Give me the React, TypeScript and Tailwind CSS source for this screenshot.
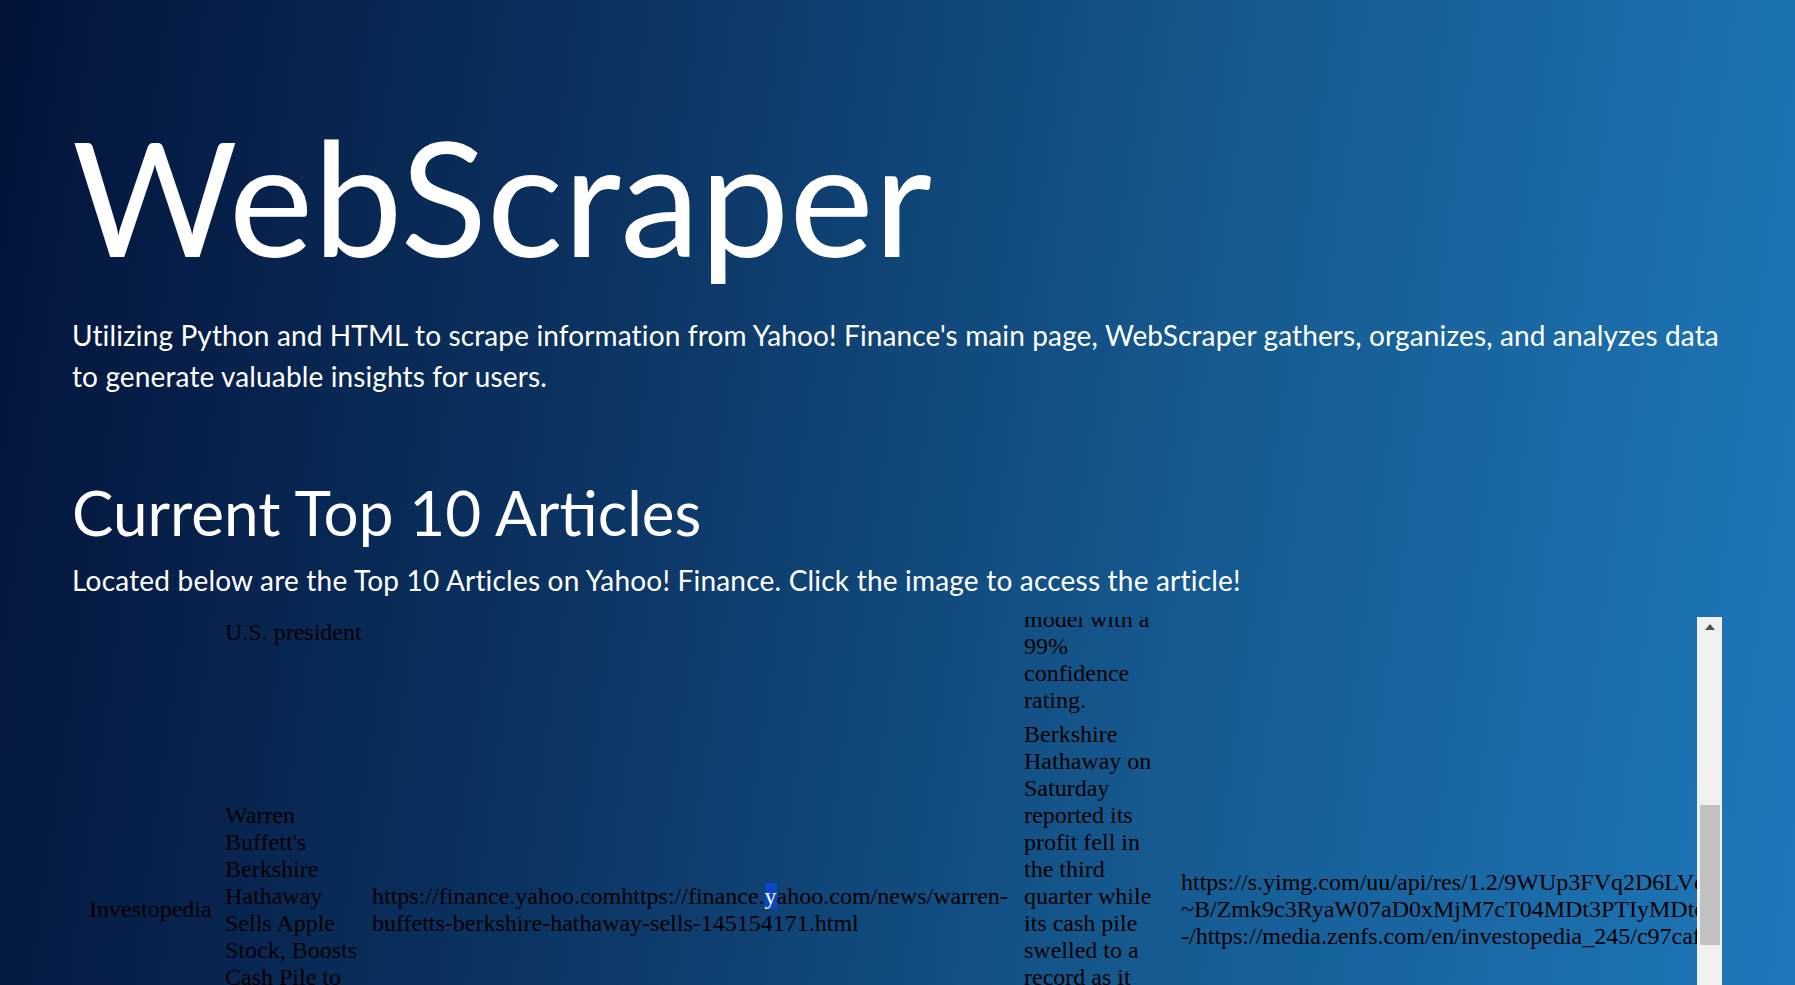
const sans = "font-['Lato',sans-serif]";

function ScrollBar() {
  return (
    <div className="w-[25px] shrink-0 bg-[#f1f1f1] flex flex-col items-center">
      <div className="h-[20px] w-full flex items-center justify-center">
        <div className="w-0 h-0 border-l-[5px] border-r-[5px] border-b-[6px] border-l-transparent border-r-transparent border-b-[#505050]" />
      </div>
      <div className="h-[168px]" />
      <div className="w-[20px] h-[140px] bg-[#c1c1c1]" />
      <div className="h-[200px]" />
    </div>
  );
}

function ArticleTable() {
  return (
    <table className="table-fixed border-separate border-spacing-0 w-[1804px] -mt-[204px] text-black font-['Liberation_Serif',serif] text-[24px] leading-[27px]">
      <colgroup>
        <col className="w-[148px]" />
        <col className="w-[147px]" />
        <col className="w-[652px]" />
        <col className="w-[157px]" />
        <col className="w-[700px]" />
      </colgroup>
      <tbody>
        <tr>
          <td className="align-middle pl-[17px] py-[3.5px]">Forbes</td>
          <td className="align-middle pl-[5px] pr-[2px] py-[3.5px]">
            Prediction Market Odds Shift On Who Will Be The Next
            <br />
            <span className="whitespace-nowrap">U.S. president</span>
          </td>
          <td className="align-middle pl-[5px] pr-[7px] py-[3.5px] whitespace-nowrap">
            https://finance.yahoo.comhttps://finance.yahoo.com/news/prediction-
            <br />
            market-odds-shift-next-president-120031412.html
          </td>
          <td className="align-middle pl-[5px] pr-[20px] py-[3.5px]">
            Bettors have
            <br />
            poured
            <br />
            millions into
            <br />
            the race after
            <br />
            one analyst
            <br />
            released an
            <br />
            updated
            <br />
            model with a
            <br />
            99%
            <br />
            confidence
            <br />
            rating.
          </td>
          <td className="align-middle pl-[5px] py-[3.5px] whitespace-nowrap">
            https://s.yimg.com/uu/api/res/1.2/Hq1kPqTz9vFbVd0lJ0r5Xw--
            <br />
            ~B/Zmk9c3RyaW07aD0xMjM7cT04MDt3PTIyMDtoPTEyMw-
            <br />
            -/https://media.zenfs.com/en/forbes_616/3f1a9bd2a0c4
          </td>
        </tr>
        <tr>
          <td className="align-middle pl-[17px] py-[3.5px]">Investopedia</td>
          <td className="align-middle pl-[5px] pr-[2px] py-[3.5px]">
            Warren Buffett's Berkshire Hathaway Sells Apple Stock, Boosts Cash Pile to Record
          </td>
          <td className="align-middle pl-[5px] pr-[7px] py-[3.5px] whitespace-nowrap">
            https://finance.yahoo.comhttps://finance.
            <span className="bg-[#0b46c6] text-white">y</span>
            ahoo.com/news/warren-
            <br />
            buffetts-berkshire-hathaway-sells-145154171.html
          </td>
          <td className="align-middle pl-[5px] pr-[20px] py-[3.5px]">
            Berkshire Hathaway on Saturday reported its profit fell in the third quarter while its cash pile swelled to a record as it continued to sell stocks, including Apple.
          </td>
          <td className="align-middle pl-[5px] py-[3.5px] whitespace-nowrap">
            https://s.yimg.com/uu/api/res/1.2/9WUp3FVq2D6LVcEZv4wdqA--
            <br />
            ~B/Zmk9c3RyaW07aD0xMjM7cT04MDt3PTIyMDtoPTEyMw-
            <br />
            -/https://media.zenfs.com/en/investopedia_245/c97caf5e8d1b
          </td>
        </tr>
      </tbody>
    </table>
  );
}

export default function App() {
  return (
    <div className="h-[985px] overflow-hidden bg-[linear-gradient(98deg,#03133a_0%,#0c3564_35%,#15598f_65%,#1e78ba_100%)] text-white px-[72px]">
      <h1 className={`${sans} text-[160px] leading-none font-normal pt-[115px]`}>WebScraper</h1>
      <p className={`${sans} text-[28px] tracking-[0.13px] leading-[41px] mt-[40px]`}>
        Utilizing Python and HTML to scrape information from Yahoo! Finance's main page, WebScraper gathers, organizes, and analyzes data
        <br />
        to generate valuable insights for users.
      </p>
      <h2 className={`${sans} text-[62px] leading-none mt-[84px]`}>Current Top 10 Articles</h2>
      <p className={`${sans} text-[28px] tracking-[0.2px] leading-[41px] mt-[17px]`}>
        Located below are the Top 10 Articles on Yahoo! Finance. Click the image to access the article!
      </p>
      <div className="flex h-[600px] w-[1650px] mt-[16px]">
        <div className="flex-1 overflow-hidden">
          <ArticleTable />
        </div>
        <ScrollBar />
      </div>
    </div>
  );
}
